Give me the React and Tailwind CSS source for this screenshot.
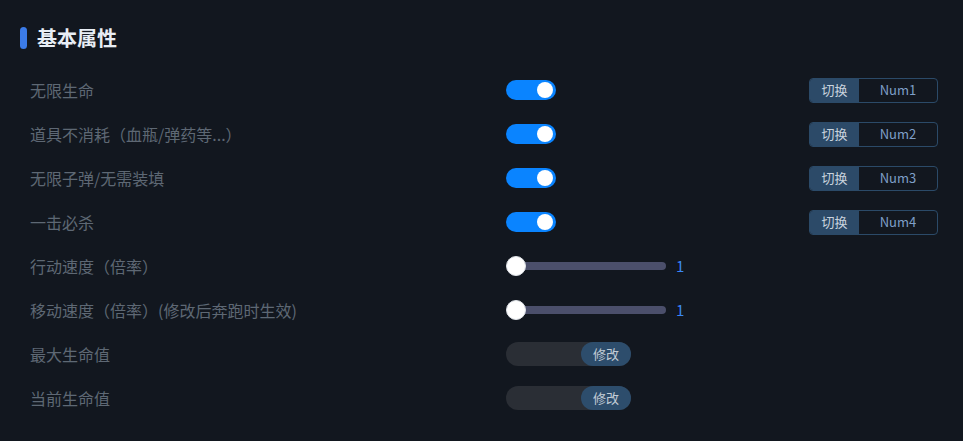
import React from 'react';

const font = { fontFamily: '"Noto Sans CJK SC", "Noto Sans", sans-serif' };

const rows = [
  { label: '无限生命', type: 'toggle', key: 'Num1' },
  { label: '道具不消耗（血瓶/弹药等...）', type: 'toggle', key: 'Num2' },
  { label: '无限子弹/无需装填', type: 'toggle', key: 'Num3' },
  { label: '一击必杀', type: 'toggle', key: 'Num4' },
  { label: '行动速度（倍率）', type: 'slider' },
  { label: '移动速度（倍率）(修改后奔跑时生效)', type: 'slider' },
  { label: '最大生命值', type: 'input' },
  { label: '当前生命值', type: 'input' },
];

function Toggle() {
  return (
    <div className="w-[50px] h-[20px] rounded-full bg-[#0a84ff] flex items-center justify-end pr-[3px]">
      <div className="w-[16px] h-[16px] rounded-full bg-white" />
    </div>
  );
}

function Slider() {
  return (
    <div className="flex items-center">
      <div className="relative w-[160px] h-[20px] flex items-center">
        <div className="ml-[10px] h-[8px] w-[150px] rounded-full bg-[#4b4f6b]" />
        <div className="absolute left-0 top-0 w-[20px] h-[20px] rounded-full bg-white border border-[#dfe3e8]" />
      </div>
      <span className="ml-[10px] text-[15px] text-[#3a86f5]">1</span>
    </div>
  );
}

function Input() {
  return (
    <div className="w-[125px] h-[24px] rounded-full bg-[#2a2e35] flex justify-end">
      <button className="w-[50px] h-[24px] rounded-full bg-[#2d4d6c] text-[13px] text-[#c3ccd6] leading-[24px]">修改</button>
    </div>
  );
}

function KeyButton({ name }) {
  return (
    <div className="flex h-[25px] w-[129px] rounded-[4px] border border-[#2b4a68] overflow-hidden text-[13px]">
      <div className="w-[49px] bg-[#2c4a68] text-[#c9d3de] flex items-center justify-center">切换</div>
      <div className="flex-1 text-[#7f9fc8] flex items-center justify-center">{name}</div>
    </div>
  );
}

export default function App() {
  return (
    <div className="w-[963px] h-[441px] bg-[#12171f] overflow-hidden" style={font}>
      <div className="flex items-center gap-[10px] pl-[20px] pt-[27px]">
        <div className="w-[7px] h-[22px] rounded-full bg-[#3b7be8]" />
        <h2 className="text-[20px] font-bold text-[#e8eef5] leading-[22px]">基本属性</h2>
      </div>
      <div className="mt-[19px] pl-[30px] pr-[25px]">
        {rows.map((r, i) => (
          <div key={i} className="grid grid-cols-[476px_1fr_auto] items-center h-[44px]">
            <span className="text-[16px] text-[#5e6874]">{r.label}</span>
            <div>
              {r.type === 'toggle' && <Toggle />}
              {r.type === 'slider' && <Slider />}
              {r.type === 'input' && <Input />}
            </div>
            <div>{r.key && <KeyButton name={r.key} />}</div>
          </div>
        ))}
      </div>
    </div>
  );
}
